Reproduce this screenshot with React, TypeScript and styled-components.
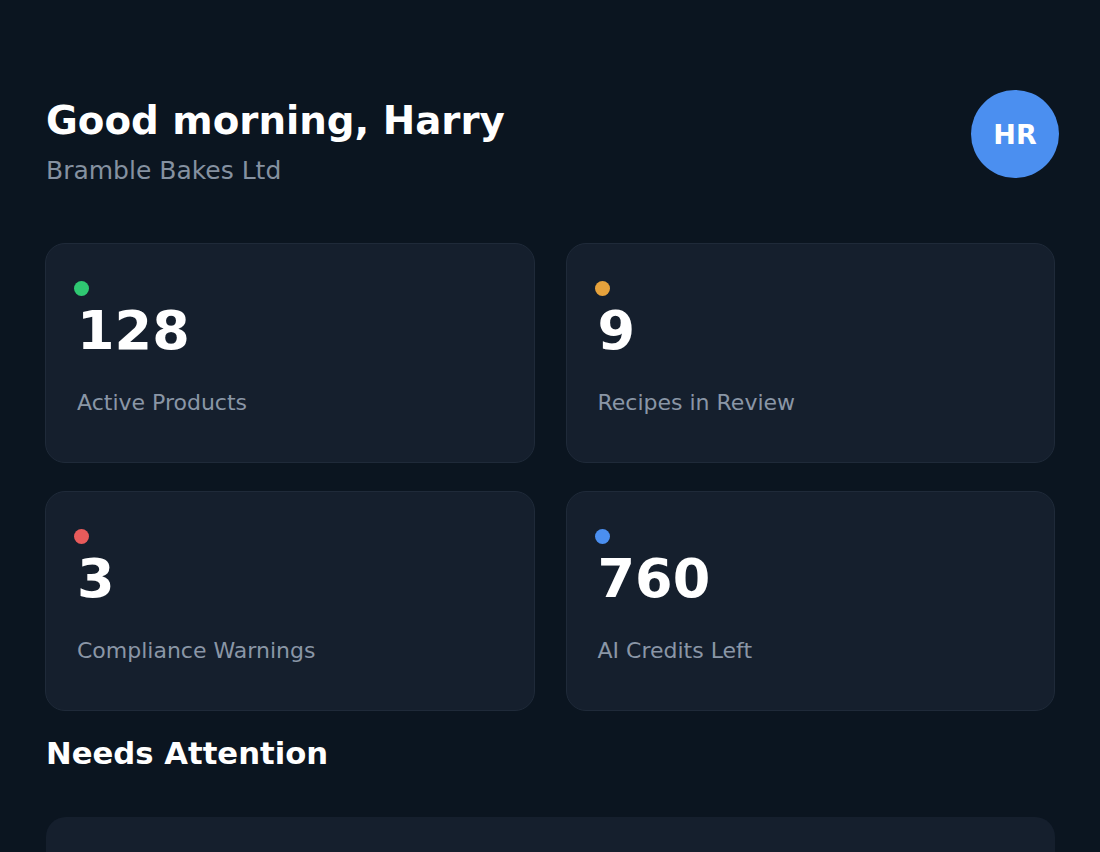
import React from "react";
import styled, { createGlobalStyle } from "styled-components";

interface Stat {
  value: string;
  label: string;
  color: string;
}

const stats: Stat[] = [
  { value: "128", label: "Active Products", color: "#2fc872" },
  { value: "9", label: "Recipes in Review", color: "#e6a23c" },
  { value: "3", label: "Compliance Warnings", color: "#e85b5b" },
  { value: "760", label: "AI Credits Left", color: "#4b8ff0" },
];

const GlobalStyle = createGlobalStyle`
  html, body {
    margin: 0;
    padding: 0;
    background: #0b1520;
    font-family: "DejaVu Sans", "Liberation Sans", sans-serif;
    color: #ffffff;
  }
`;

const Page = styled.div`
  min-height: 100vh;
  padding: 90px 45px 0 46px;
  box-sizing: border-box;
`;

const Header = styled.header`
  display: flex;
  justify-content: space-between;
  align-items: flex-start;
`;

const Greeting = styled.div`
  padding-top: 8px;
`;

const Title = styled.h1`
  margin: 0;
  font-size: 38.75px;
  font-weight: 700;
  line-height: normal;
  color: #ffffff;
`;

const Subtitle = styled.p`
  margin: 13px 0 0;
  font-size: 25px;
  line-height: normal;
  color: #8591a0;
`;

const Avatar = styled.div`
  width: 88px;
  height: 88px;
  margin-right: -4px;
  border-radius: 50%;
  background: #4b8ff0;
  display: flex;
  align-items: center;
  justify-content: center;
  font-size: 27px;
  font-weight: 700;
  color: #ffffff;
`;

const StatsGrid = styled.div`
  display: grid;
  grid-template-columns: 1fr 1fr;
  column-gap: 31px;
  row-gap: 28px;
  margin-top: 58px;
  margin-left: -1px;
`;

const StatCard = styled.div`
  background: #151f2d;
  border: 1px solid #1f2a39;
  border-radius: 20px;
  padding: 37px 28px 47px;
`;

const Dot = styled.span<{ $color: string }>`
  display: block;
  width: 15px;
  height: 15px;
  border-radius: 50%;
  background: ${(p) => p.$color};
`;

const StatValue = styled.div`
  margin-top: 8px;
  padding-left: 3px;
  font-size: 54px;
  font-weight: 700;
  line-height: 1;
  color: #ffffff;
`;

const StatLabel = styled.div`
  margin-top: 32px;
  padding-left: 3px;
  font-size: 22px;
  line-height: normal;
  color: #8a96a6;
`;

const SectionTitle = styled.h2`
  margin: 25px 0 0;
  font-size: 30.7px;
  font-weight: 700;
  line-height: normal;
  color: #ffffff;
`;

const AttentionCard = styled.div`
  margin-top: 46px;
  min-height: 160px;
  background: #151f2d;
  border-radius: 20px;
`;

const App: React.FC = () => {
  return (
    <>
      <GlobalStyle />
      <Page>
        <Header>
          <Greeting>
            <Title>Good morning, Harry</Title>
            <Subtitle>Bramble Bakes Ltd</Subtitle>
          </Greeting>
          <Avatar>HR</Avatar>
        </Header>

        <StatsGrid>
          {stats.map((s) => (
            <StatCard key={s.label}>
              <Dot $color={s.color} />
              <StatValue>{s.value}</StatValue>
              <StatLabel>{s.label}</StatLabel>
            </StatCard>
          ))}
        </StatsGrid>

        <SectionTitle>Needs Attention</SectionTitle>
        <AttentionCard />
      </Page>
    </>
  );
};

export default App;
